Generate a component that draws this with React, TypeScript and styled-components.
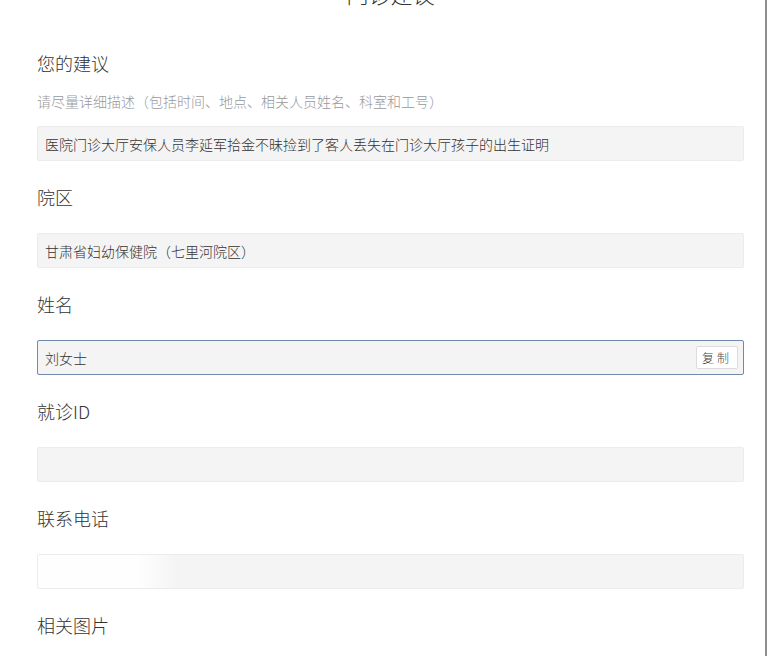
import styled, { createGlobalStyle } from 'styled-components';

const GlobalStyle = createGlobalStyle`
  html, body {
    margin: 0;
    padding: 0;
    background: #fff;
  }
  body {
    font-family: "Noto Sans CJK SC", "Noto Sans", sans-serif;
    font-weight: 300;
    color: #333;
  }
`;

// 页面外框（右侧带一条灰线）
const Page = styled.div`
  box-sizing: border-box;
  width: 767px;
  min-height: 656px;
  padding: 0 21px 0 37px;
  border-right: 2px solid #8e8e8e;
  overflow: hidden;
`;

// 顶部标题，页面已向下滚动，只露出底部一点
const Title = styled.h1`
  margin: -22px 0 0 0;
  height: 30px;
  line-height: 30px;
  font-size: 22px;
  font-weight: 300;
  text-align: center;
  color: #333;
`;

const Form = styled.div`
  padding-top: 43px;
`;

const Field = styled.div`
  margin-bottom: 24px;
`;

const Label = styled.div`
  height: 24px;
  line-height: 24px;
  font-size: 18px;
  font-weight: 300;
  color: #333;
`;

const Hint = styled.div`
  margin-top: 16px;
  line-height: 20px;
  font-size: 14px;
  color: #999;
`;

const InputBox = styled.div<{ $focused?: boolean; $masked?: boolean; $tight?: boolean }>`
  box-sizing: border-box;
  display: flex;
  align-items: center;
  justify-content: space-between;
  height: 35px;
  margin-top: ${(p) => (p.$tight ? '15px' : '24px')};
  padding: 0 5px 0 7px;
  font-size: 14px;
  color: #333;
  border: 1px solid ${(p) => (p.$focused ? '#7089ad' : '#ececec')};
  border-radius: 2px;
  background: ${(p) =>
    p.$masked
      ? 'linear-gradient(to right, rgba(255,255,255,0.95) 0, rgba(255,255,255,0.9) 100px, rgba(255,255,255,0) 140px), #f4f4f4'
      : '#f4f4f4'};
`;

const CopyButton = styled.button`
  box-sizing: border-box;
  height: 23px;
  padding: 0 5px;
  font-family: "Noto Sans CJK SC", sans-serif;
  font-weight: 300;
  font-size: 12px;
  letter-spacing: 3px;
  color: #444;
  background: #fff;
  border: 1px solid #dcdcdc;
  border-radius: 2px;
`;

type FieldItem = {
  label: string;
  hint?: string;
  value?: string;
  focused?: boolean;
  copy?: boolean;
  masked?: boolean;
  noInput?: boolean;
};

const fields: FieldItem[] = [
  {
    label: '您的建议',
    hint: '请尽量详细描述（包括时间、地点、相关人员姓名、科室和工号）',
    value: '医院门诊大厅安保人员李延军拾金不昧捡到了客人丢失在门诊大厅孩子的出生证明',
  },
  { label: '院区', value: '甘肃省妇幼保健院（七里河院区）' },
  { label: '姓名', value: '刘女士', focused: true, copy: true },
  { label: '就诊ID', value: '' },
  { label: '联系电话', value: '', masked: true },
  { label: '相关图片', noInput: true },
];

export default function App() {
  return (
    <>
      <GlobalStyle />
      <Page>
        <Title>门诊建议</Title>
        <Form>
          {fields.map((f) => (
            <Field key={f.label}>
              <Label>{f.label}</Label>
              {f.hint && <Hint>{f.hint}</Hint>}
              {!f.noInput && (
                <InputBox $focused={f.focused} $masked={f.masked} $tight={!!f.hint}>
                  <span>{f.value}</span>
                  {f.copy && <CopyButton>复制</CopyButton>}
                </InputBox>
              )}
            </Field>
          ))}
        </Form>
      </Page>
    </>
  );
}
